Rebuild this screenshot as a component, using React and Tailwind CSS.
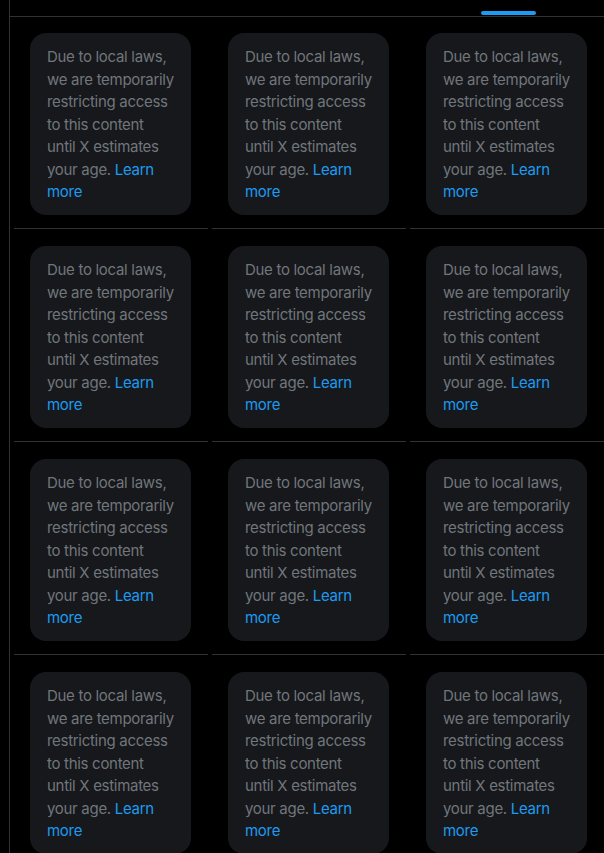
const cells = Array.from({ length: 12 }, (_, i) => i);

function AgeNotice() {
  return (
    <div className="w-[161px] h-[182px] rounded-2xl bg-[#16181c] pl-[17px] pr-4 pt-[13px] pb-3 text-[15px] leading-[22.5px] tracking-[-0.3px] text-[#71767b]">
      Due to local laws, we are temporarily restricting access to this content until X estimates your age.{' '}
      <a href="#" className="text-[#1d9bf0]">
        Learn more
      </a>
    </div>
  );
}

export default function App() {
  return (
    <div
      className="min-h-[853px] bg-black overflow-hidden"
      style={{ fontFamily: 'Inter, "Noto Sans", sans-serif' }}
    >
      <div className="ml-[9px] border-l border-[#2f3336] min-h-[853px]">
        <div className="h-[17px] border-b border-[#2f3336] flex items-end justify-end pr-[68px] pb-px">
          <div className="w-[55px] h-1 rounded-full bg-[#1d9bf0]" />
        </div>
        <div className="grid grid-cols-3 gap-x-1 pl-1">
          {cells.map((i) => (
            <div
              key={i}
              className={
                i < 3
                  ? 'pl-4 pt-4 pb-[13px] border-b border-[#2f3336]'
                  : 'pl-4 pt-[17px] pb-[13px] border-b border-[#2f3336]'
              }
            >
              <AgeNotice />
            </div>
          ))}
        </div>
      </div>
    </div>
  );
}
